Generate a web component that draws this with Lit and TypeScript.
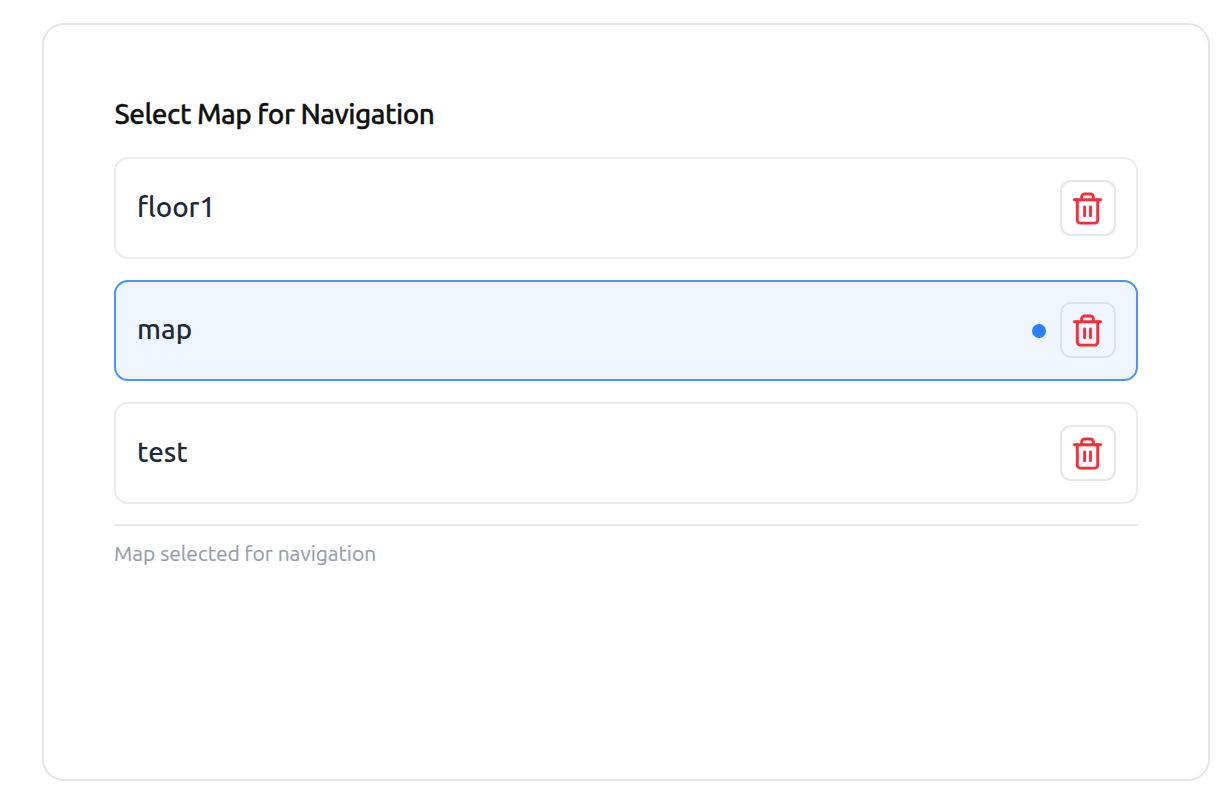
import { LitElement, html, css } from "lit";
import { customElement, property, state } from "lit/decorators.js";
import { classMap } from "lit/directives/class-map.js";

@customElement("map-row")
class MapRow extends LitElement {
  @property() name = "";
  @property({ type: Boolean }) selected = false;

  static styles = css`
    :host { display: block; }
    .row {
      box-sizing: border-box;
      height: 101.5px;
      padding: 0 20px 0 21px;
      display: flex;
      align-items: center;
      border: 2px solid #ebecf0;
      border-radius: 14px;
      background: #fff;
    }
    .row.selected { border-color: #4a92ff; background: #eff6ff; }
    .name {
      flex: 1;
      font: 500 27.8px/40px Ubuntu, "Noto Sans", sans-serif;
      color: #1e2939;
      padding-bottom: 2.4px;
    }
    .dot { width: 14px; height: 14px; border-radius: 50%; background: #2b7fff; margin: 1px 14px 0 0; }
    button {
      box-sizing: border-box;
      width: 56px;
      height: 56px;
      padding: 1px 1px 0 0;
      display: flex;
      align-items: center;
      justify-content: center;
      border: 2px solid #e9e6e7;
      border-radius: 11px;
      background: #fff;
      color: #fb2c36;
    }
    .selected button { background: transparent; border-color: #e3e1e8; }
    svg { display: block; width: 35px; height: 35px; }
  `;

  render() {
    return html`<div class=${classMap({ row: true, selected: this.selected })}>
      <span class="name">${this.name}</span>
      ${this.selected ? html`<span class="dot"></span>` : ""}
      <button aria-label="Delete">
        <svg viewBox="0 0 24 24" fill="none" stroke="currentColor" stroke-width="2" stroke-linecap="round" stroke-linejoin="round">
          <path d="M3 6h18" />
          <path d="M19 6v14c0 1-1 2-2 2H7c-1 0-2-1-2-2V6" />
          <path d="M8 6V4c0-1 1-2 2-2h4c1 0 2 1 2 2v2" />
          <path d="M10 11v6" />
          <path d="M14 11v6" />
        </svg>
      </button>
    </div>`;
  }
}

@customElement("app-root")
class AppRoot extends LitElement {
  @state() maps = ["floor1", "map", "test"];
  @state() current = "map";

  static styles = css`
    :host {
      display: block;
      box-sizing: border-box;
      height: 800px;
      padding: 23px 22px 19px 42px;
      background: #fff;
      font-family: Ubuntu, "Noto Sans", sans-serif;
    }
    .card {
      box-sizing: border-box;
      height: 758px;
      border: 2px solid #e6e4e5;
      border-radius: 22px;
      padding: 69px 70px;
    }
    h2 {
      margin: 0 0 23px;
      font-size: 28px;
      line-height: 40px;
      font-weight: 500;
      letter-spacing: -0.49px;
      color: #111;
      -webkit-text-stroke: 0.35px #111;
      text-indent: 0.5px;
      white-space: nowrap;
    }
    .list { display: flex; flex-direction: column; gap: 21px; }
    .status {
      margin-top: 20.5px;
      border-top: 2px solid #e9eaee;
      padding-top: 13px;
      font-size: 21px;
      line-height: 28px;
      color: #969eac;
      -webkit-text-stroke: 0.2px #969eac;
      white-space: nowrap;
    }
  `;

  render() {
    return html`<section class="card">
      <h2>Select Map for Navigation</h2>
      <div class="list">
        ${this.maps.map((m) => html`<map-row .name=${m} .selected=${m === this.current}></map-row>`)}
      </div>
      <div class="status">Map selected for navigation</div>
    </section>`;
  }
}
